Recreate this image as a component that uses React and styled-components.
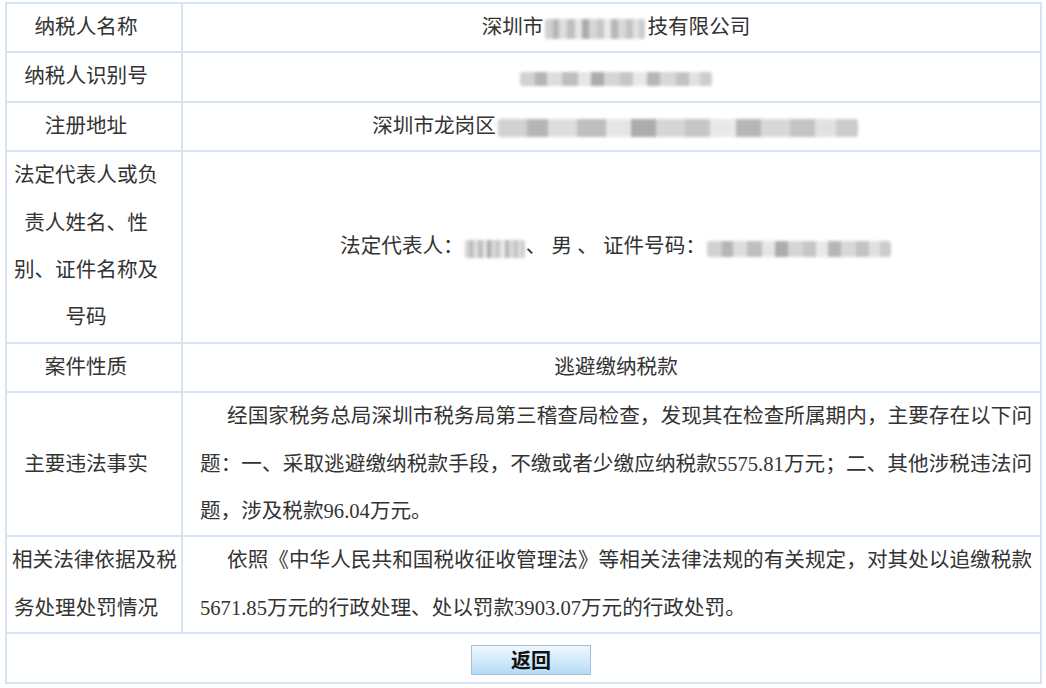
import React from 'react';
import styled, { createGlobalStyle } from 'styled-components';

const Global = createGlobalStyle`
  html, body { margin: 0; padding: 0; background: #ffffff; }
  body {
    font-family: "Liberation Serif", "Noto Sans CJK SC", serif;
    color: #333333;
  }
`;

const Page = styled.div`
  padding: 2px 4px 0 5px;
`;

const Table = styled.table`
  width: 1037px;
  border-collapse: collapse;
  table-layout: fixed;
  border: 2px solid #d5e3f2;
  font-size: 20.6px;
  line-height: 47.4px;
`;

const LabelCol = styled.col`
  width: 176px;
`;

const Cell = styled.td`
  border: 2px solid #d5e3f2;
  vertical-align: middle;
  padding: 0;
`;

const Label = styled(Cell)`
  text-align: center;
  padding: 0 21px 0 5px;
  white-space: nowrap;
`;

const Value = styled(Cell)`
  text-align: center;
  padding: 0 8px 0 17px;
  white-space: pre;
`;

const Para = styled(Cell)`
  text-align: justify;
  text-indent: 27px;
  padding: 0 8px 0 17px;
`;

const ButtonCell = styled(Cell)`
  text-align: center;
  height: 47px;
  padding: 0 0 0 15px;
`;

const Redacted = styled.span`
  display: inline-block;
  width: ${p => p.$w}px;
  height: ${p => p.$h || 16}px;
  vertical-align: middle;
  margin: 0 ${p => p.$gap || 2}px;
  background:
    linear-gradient(90deg,
      #c9c9c9 0 8%, #a9a9a9 8% 14%, #d8d8d8 14% 22%, #b4b4b4 22% 30%,
      #e2e2e2 30% 37%, #9e9e9e 37% 44%, #cfcfcf 44% 52%, #bdbdbd 52% 59%,
      #e6e6e6 59% 66%, #aaaaaa 66% 73%, #d2d2d2 73% 81%, #b9b9b9 81% 88%,
      #dcdcdc 88% 94%, #c4c4c4 94% 100%);
  filter: blur(1.4px);
  opacity: 0.85;
  border-radius: 3px;
`;

const Button = styled.button`
  width: 120px;
  height: 30px;
  padding: 0;
  vertical-align: middle;
  border: 1px solid #a4bfd6;
  background: linear-gradient(#eef7fd, #d3ebfa 50%, #b4dbf5);
  font-family: "Noto Sans CJK SC", sans-serif;
  font-size: 20px;
  font-weight: 700;
  line-height: 28px;
  color: #111111;
  cursor: pointer;
`;

export default function App() {
  return (
    <Page>
      <Global />
      <Table>
        <colgroup>
          <LabelCol />
          <col />
        </colgroup>
        <tbody>
          <tr>
            <Label>纳税人名称</Label>
            <Value>深圳市<Redacted $w={100} $h={20} />技有限公司</Value>
          </tr>
          <tr>
            <Label>纳税人识别号</Label>
            <Value><Redacted $w={192} $h={14} /></Value>
          </tr>
          <tr>
            <Label>注册地址</Label>
            <Value>深圳市龙岗区<Redacted $w={360} $h={18} /></Value>
          </tr>
          <tr>
            <Label>
              法定代表人或负<br />责人姓名、性<br />别、证件名称及<br />号码
            </Label>
            <Value>
              法定代表人：<Redacted $w={60} $h={18} $gap={1} />{'、 男 、 证件号码：'}<Redacted $w={184} $h={16} $gap={1} />
            </Value>
          </tr>
          <tr>
            <Label>案件性质</Label>
            <Value>逃避缴纳税款</Value>
          </tr>
          <tr>
            <Label>主要违法事实</Label>
            <Para>
              经国家税务总局深圳市税务局第三稽查局检查，发现其在检查所属期内，主要存在以下问题：一、采取逃避缴纳税款手段，不缴或者少缴应纳税款5575.81万元；二、其他涉税违法问题，涉及税款96.04万元。
            </Para>
          </tr>
          <tr>
            <Label>相关法律依据及税<br />务处理处罚情况</Label>
            <Para>
              依照《中华人民共和国税收征收管理法》等相关法律法规的有关规定，对其处以追缴税款5671.85万元的行政处理、处以罚款3903.07万元的行政处罚。
            </Para>
          </tr>
          <tr>
            <ButtonCell colSpan={2}>
              <Button type="button">返回</Button>
            </ButtonCell>
          </tr>
        </tbody>
      </Table>
    </Page>
  );
}
